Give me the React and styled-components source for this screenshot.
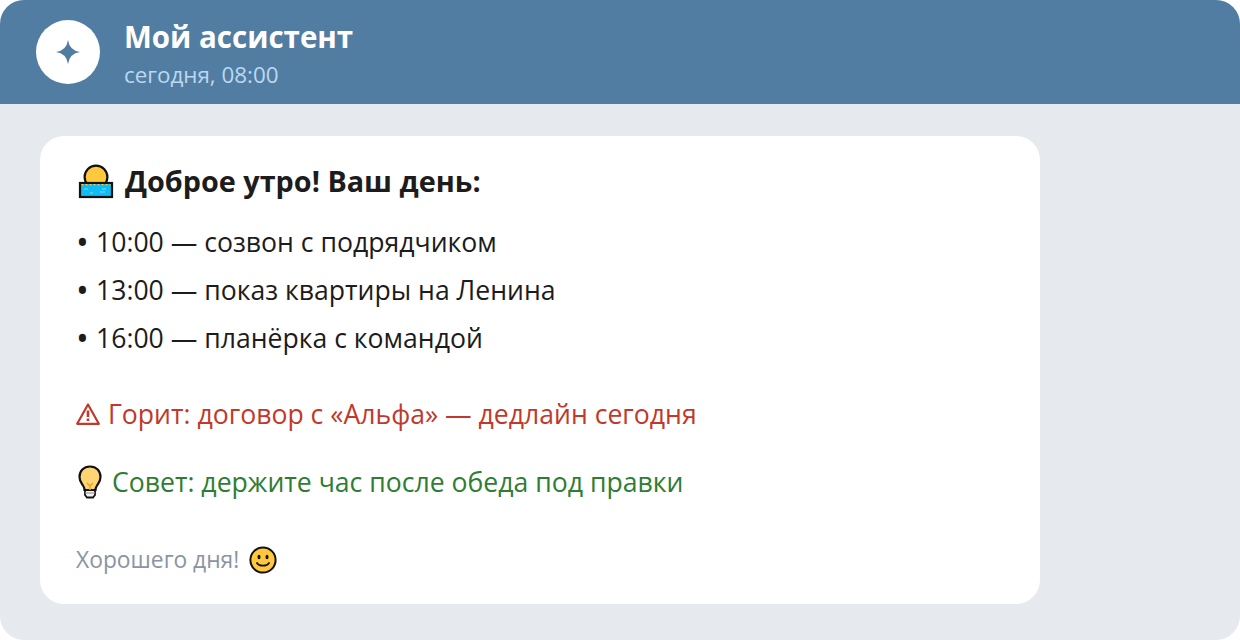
import React from "react";
import styled, { createGlobalStyle } from "styled-components";

const GlobalStyle = createGlobalStyle`
  html, body { margin: 0; padding: 0; background: #fff; }
  body { font-family: "Open Sans", "Noto Sans", "Liberation Sans", sans-serif; }
`;

const Frame = styled.div`
  width: 1240px;
  height: 640px;
  border-radius: 24px;
  overflow: hidden;
  background: #e6e9ee;
`;

const Header = styled.header`
  height: 104px;
  box-sizing: border-box;
  padding: 14px 36px;
  display: flex;
  align-items: center;
  gap: 24px;
  background: #527da3;
`;

const Avatar = styled.div`
  width: 64px;
  height: 64px;
  border-radius: 50%;
  background: #fff;
  display: flex;
  align-items: center;
  justify-content: center;
`;

const HeaderText = styled.div`
  padding-top: 4px;
`;

const Title = styled.div`
  font-size: 29.5px;
  line-height: 38px;
  font-weight: 700;
  color: #fff;
`;

const Subtitle = styled.div`
  margin-top: 4px;
  font-size: 22.4px;
  line-height: 30px;
  color: #bcd8f0;
`;

const Card = styled.main`
  width: 1000px;
  height: 468px;
  box-sizing: border-box;
  margin: 32px 40px;
  padding: 22px 36px;
  border-radius: 24px;
  background: #fff;
`;

const Line = styled.div`
  display: flex;
  align-items: center;
  gap: ${(p) => p.$gap || 8}px;
  font-size: 26.6px;
  color: ${(p) => p.$color || "#1c1c1c"};
  margin-top: ${(p) => p.$top || 0}px;
  line-height: ${(p) => p.$height || 48}px;
`;

const Heading = styled(Line)`
  font-size: 28.8px;
  font-weight: 700;
`;

const SmallLine = styled(Line)`
  font-size: 22.8px;
`;

const Bullet = styled.span`
  width: 20px;
  flex: none;
  font-size: 34px;
  line-height: 48px;
  margin-right: -8px;
`;

function Sunrise() {
  return (
    <svg width="40" height="38" viewBox="0 0 40 38">
      <circle cx="20" cy="15" r="11.400" fill="#ffc83d" stroke="#111" strokeWidth="2.200" />
      <rect x="4" y="21" width="32" height="14" fill="#0fbdf5" stroke="#111" strokeWidth="2.200" />
      <path d="M5.500 22.600h29" stroke="#ffc83d" strokeWidth="1.200" strokeDasharray="2 2" />
      <path d="M8 27h4M14 31h3M26 27h4M24 30h5" stroke="#7fdcf9" strokeWidth="1" />
    </svg>
  );
}

function Warning() {
  return (
    <svg width="24" height="24" viewBox="0 0 24 24" fill="none" stroke="#c0392b" strokeWidth="2.200">
      <path d="M12 2.500 L22.800 21.800 H1.200 Z" strokeLinejoin="round" />
      <path d="M12 8.500v6.500M12 16.500v2.500" strokeWidth="2.600" />
    </svg>
  );
}

function Bulb() {
  return (
    <svg width="28" height="34" viewBox="0 0 28 34">
      <path d="M14 1.500C7.500 1.500 3.500 6 3.500 12c0 4 2 6 3.500 8.500 1 1.500 1.500 3 1.500 4.500h11c0-1.500 .5-3 1.500-4.500 1.500-2.500 3.500-4.500 3.500-8.500 0-6-4-10.500-10.500-10.500z" fill="#ffd473" stroke="#111" strokeWidth="2.200" />
      <path d="M9 25h10v5l-2 2.500h-6l-2-2.500z" fill="#f2f2f2" stroke="#111" strokeWidth="1.800" />
      <path d="M9 28h10" stroke="#999" strokeWidth="1.200" />
      <path d="M11 18l3 3 3-3M14 21v4" stroke="#f0a020" fill="none" strokeWidth="1.500" />
    </svg>
  );
}

function Smile() {
  return (
    <svg width="28" height="28" viewBox="0 0 28 28">
      <circle cx="14" cy="14" r="12.600" fill="#ffc83d" stroke="#111" strokeWidth="2" />
      <ellipse cx="10" cy="11" rx="1.500" ry="2.200" fill="#111" />
      <ellipse cx="18" cy="11" rx="1.500" ry="2.200" fill="#111" />
      <path d="M8 17c2 3.500 10 3.500 12 0" fill="none" stroke="#111" strokeWidth="1.800" strokeLinecap="round" />
    </svg>
  );
}

export default function App() {
  return (
    <Frame>
      <GlobalStyle />
      <Header>
        <Avatar>
          <svg width="24" height="24" viewBox="0 0 24 24">
            <path d="M12 0Q13.500 10.500 24 12Q13.500 13.500 12 24Q10.500 13.500 0 12Q10.500 10.500 12 0Z" fill="#527da3" />
          </svg>
        </Avatar>
        <HeaderText>
          <Title>Мой ассистент</Title>
          <Subtitle>сегодня, 08:00</Subtitle>
        </HeaderText>
      </Header>
      <Card>
        <Heading $gap={9} $height={46}><Sunrise />Доброе утро! Ваш день:</Heading>
        <Line $top={14}><Bullet>•</Bullet>10:00 — созвон с подрядчиком</Line>
        <Line><Bullet>•</Bullet>13:00 — показ квартиры на Ленина</Line>
        <Line><Bullet>•</Bullet>16:00 — планёрка с командой</Line>
        <Line $top={28} $color="#c0392b"><Warning />Горит: договор с «Альфа» — дедлайн сегодня</Line>
        <Line $top={20} $color="#2e7d32"><Bulb />Совет: держите час после обеда под правки</Line>
        <SmallLine $top={30} $gap={10} $color="#8a94a3"><span>Хорошего дня!</span><Smile /></SmallLine>
      </Card>
    </Frame>
  );
}
